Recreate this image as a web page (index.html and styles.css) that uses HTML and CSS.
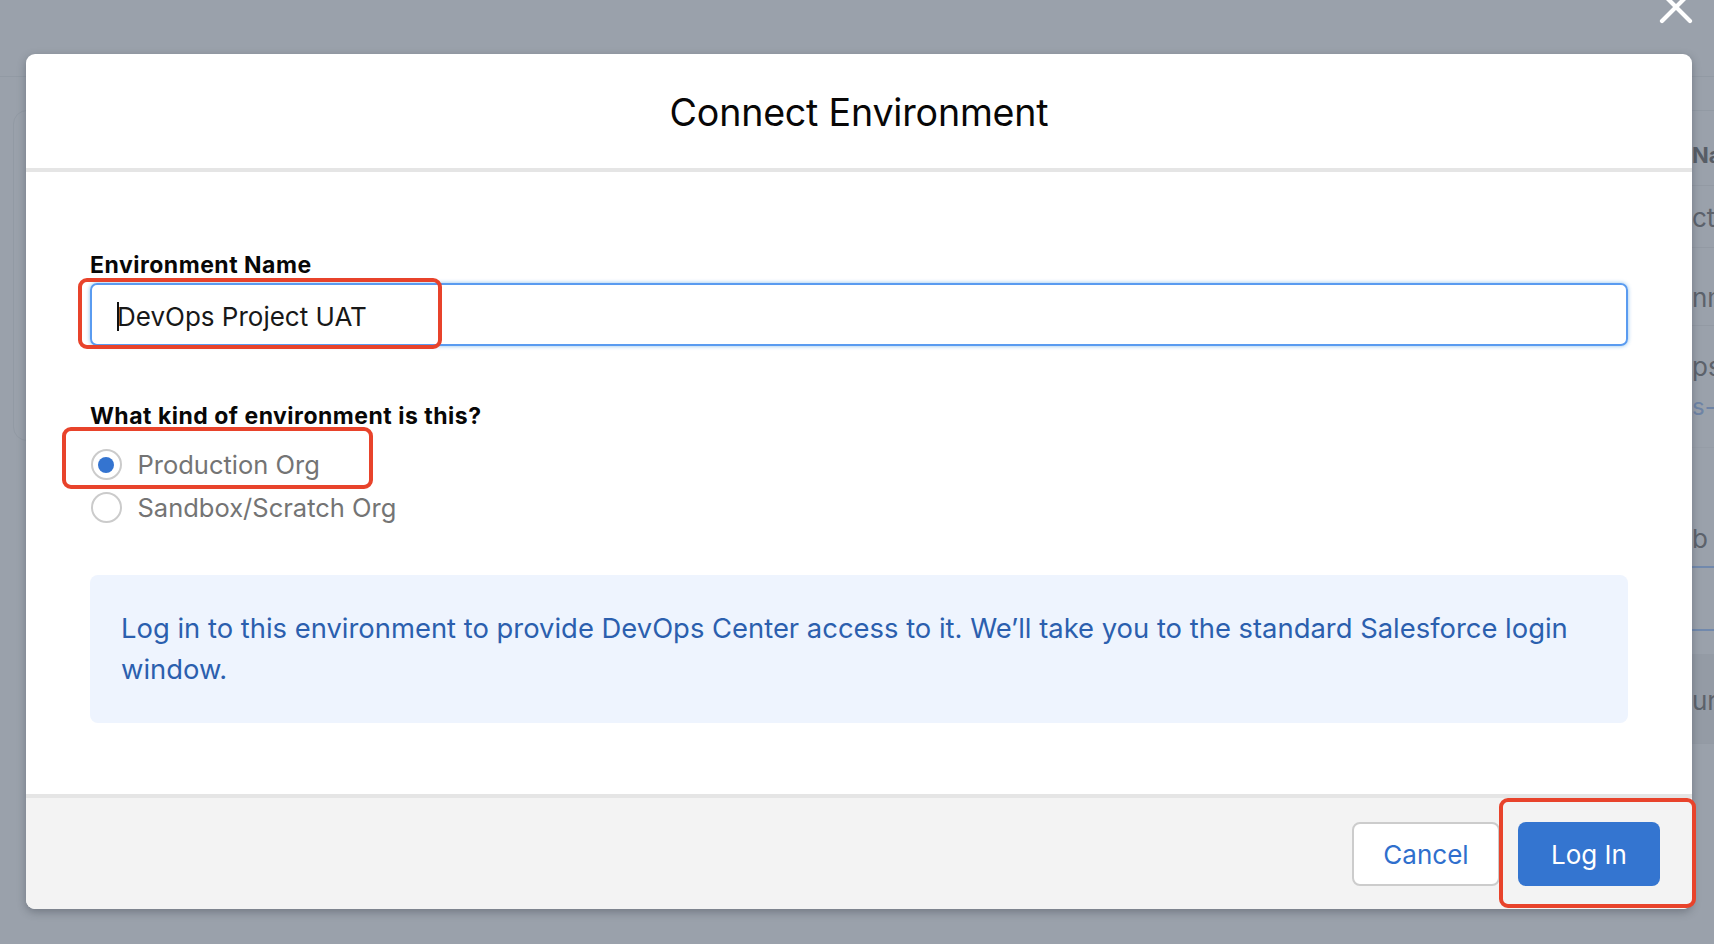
FILE: index.html
```html
<!DOCTYPE html>
<html lang="en">
<head>
<meta charset="utf-8">
<title>Connect Environment</title>
<link rel="stylesheet" href="styles.css">
</head>
<body>
  <div class="page">
    <div class="page-top"></div>
    <div class="page-main">
      <div class="side-card"></div>
      <div class="table">
        <div class="trow r1"><span class="th">Na</span></div>
        <div class="trow r2"><span>ct</span></div>
        <div class="trow r3"><span>nm</span></div>
        <div class="trow r4"><span>ps</span><span class="link">s-c</span></div>
        <div class="trow r5"><span>b</span></div>
        <div class="trow r6"></div>
        <div class="trow r7"><span>ur</span></div>
      </div>
    </div>
  </div>

  <svg class="close" width="40" height="32" viewBox="0 0 40 32" aria-label="Close">
    <path d="M6 29 L34 1 M6 1 L34 29" stroke="#ffffff" stroke-width="4.2" stroke-linecap="round" fill="none"/>
  </svg>

  <section class="modal">
    <header class="modal-header">
      <h1>Connect Environment</h1>
    </header>
    <div class="modal-body">
      <label class="field-label">Environment Name</label>
      <div class="input"><span class="caret"></span>DevOps Project UAT</div>

      <div class="field-label group-label">What kind of environment is this?</div>
      <div class="radio-row">
        <span class="radio checked"><span class="dot"></span></span>
        <span class="radio-text">Production Org</span>
      </div>
      <div class="radio-row">
        <span class="radio"></span>
        <span class="radio-text">Sandbox/Scratch Org</span>
      </div>

      <div class="info">Log in to this environment to provide DevOps Center access to it. We’ll take you to the standard Salesforce login window.</div>
    </div>
    <footer class="modal-footer">
      <button class="btn btn-neutral">Cancel</button>
      <button class="btn btn-brand">Log In</button>
    </footer>
  </section>

  <div class="mark mark-name"></div>
  <div class="mark mark-radio"></div>
  <div class="mark mark-login"></div>
</body>
</html>
```

FILE: styles.css
```css
* { box-sizing: border-box; }

html, body {
  margin: 0;
  padding: 0;
}

body {
  width: 1714px;
  height: 944px;
  overflow: hidden;
  position: relative;
  background: #9aa1ab;
  font-family: Inter, "Noto Sans", "Liberation Sans", sans-serif;
  color: #080707;
}

/* background page (seen through backdrop) */
.page-top {
  height: 77px;
  border-bottom: 1px solid #929aa4;
}

.page-main {
  display: flex;
  justify-content: space-between;
  align-items: flex-start;
  padding-top: 33px;
}

.side-card {
  margin-left: 13px;
  width: 320px;
  height: 331px;
  border: 1px solid #929aa4;
  border-radius: 14px;
}

.table {
  width: 60px;
  margin-right: -38px;
  border-top: 1px solid #929aa4;
  color: #5c626b;
  font-size: 26px;
  line-height: 30px;
}

.trow {
  border-bottom: 1px solid #939aa4;
  display: flex;
  flex-direction: column;
}

.trow span { display: block; }

.r1 { height: 75px; padding-top: 29px; }
.r1 .th { font-weight: 700; font-size: 22px; color: #575d66; }
.r2 { height: 62px; padding-top: 17px; }
.r3 { height: 78px; padding-top: 35px; }
.r4 { height: 122px; padding-top: 26px; gap: 10px; border-bottom-color: #969da7; }
.r4 .link { color: #6e84a6; font-size: 24px; }
.r5 { height: 120px; padding-top: 76px; border-bottom: 2px solid #7189ad; }
.r6 { height: 63px; border-bottom: 2px solid #7189ad; }
.r7 { height: 113px; border-top: 23px solid #9aa1ab; background: #949ba5; padding-top: 32px; }

/* close icon */
.close {
  position: absolute;
  left: 1656px;
  top: -8px;
}

/* modal */
.modal {
  position: absolute;
  left: 26px;
  top: 54px;
  width: 1666px;
  height: 855px;
  background: #ffffff;
  border-radius: 9px;
  box-shadow: 0 3px 8px rgba(40, 46, 56, 0.35);
  display: flex;
  flex-direction: column;
  overflow: hidden;
}

.modal-header {
  height: 118px;
  flex: none;
  display: flex;
  align-items: center;
  justify-content: center;
  border-bottom: 4px solid #e5e5e5;
  padding-top: 2px;
}

.modal-header h1 {
  margin: 0;
  font-size: 37.6px;
  font-weight: 400;
  letter-spacing: -0.2px;
  color: #080707;
}

.modal-body {
  flex: 1;
  padding: 79px 64px 0 64px;
}

.field-label {
  display: block;
  font-size: 23px;
  letter-spacing: 0.5px;
  line-height: 28px;
  font-weight: 700;
  color: #080707;
}

.input {
  margin-top: 4px;
  height: 63px;
  border: 2px solid #5a9bf0;
  border-radius: 7px;
  box-shadow: 0 0 4px rgba(1, 118, 211, 0.45);
  padding: 3px 0 0 25px;
  display: flex;
  align-items: center;
  font-size: 26px;
  color: #181818;
}

.caret {
  display: inline-block;
  width: 2px;
  height: 29px;
  background: #111;
  margin-right: -2px;
}

.group-label {
  margin-top: 56px;
}

.radio-row {
  display: flex;
  align-items: center;
  height: 43px;
}

.group-label + .radio-row { margin-top: 13px; }

.radio {
  width: 31px;
  height: 31px;
  border: 2px solid #cbcbcb;
  border-radius: 50%;
  display: flex;
  align-items: center;
  justify-content: center;
  flex: none;
  background: #fff;
  margin-left: 0.5px;
}

.dot {
  width: 16px;
  height: 16px;
  border-radius: 50%;
  background: #3474d0;
}

.radio-text {
  margin-left: 16px;
  font-size: 25.5px;
  color: #747474;
}

.info {
  margin-top: 46px;
  background: #eef4fe;
  border-radius: 8px;
  padding: 33px 31px;
  font-size: 27.4px;
  line-height: 41px;
  color: #2b5fae;
}

.modal-footer {
  height: 115px;
  flex: none;
  border-top: 4px solid #e5e5e5;
  background: #f3f3f3;
  display: flex;
  justify-content: flex-end;
  align-items: flex-start;
  padding: 24px 32px 0 0;
  gap: 18px;
}

.btn {
  height: 64px;
  border-radius: 8px;
  font-family: Inter, "Noto Sans", "Liberation Sans", sans-serif;
  font-size: 26px;
  padding: 0;
  cursor: pointer;
}

.btn-neutral {
  width: 148px;
  background: #ffffff;
  border: 2px solid #cccccc;
  color: #2f6fcd;
}

.btn-brand {
  width: 142px;
  background: #3475d0;
  border: none;
  color: #ffffff;
}

/* annotation marks */
.mark {
  position: absolute;
  border: 4px solid #e8432b;
  border-radius: 9px;
}

.mark-name { left: 78px; top: 278px; width: 364px; height: 71px; }
.mark-radio { left: 62px; top: 427px; width: 311px; height: 62px; }
.mark-login { left: 1499px; top: 798px; width: 197px; height: 110px; }
```
